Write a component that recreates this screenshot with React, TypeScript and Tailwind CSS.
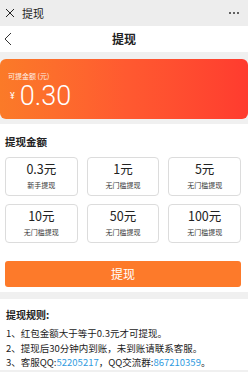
import React from "react";

const font = { fontFamily: '"Noto Sans CJK SC", "Noto Sans", sans-serif' };

const items = [
  { a: "0.3元", s: "新手提现" },
  { a: "1元", s: "无门槛提现" },
  { a: "5元", s: "无门槛提现" },
  { a: "10元", s: "无门槛提现" },
  { a: "50元", s: "无门槛提现" },
  { a: "100元", s: "无门槛提现" },
];

export default function App() {
  return (
    <div
      className="w-[248px] h-[372px] overflow-hidden bg-[#f0f0f0] text-[#222]"
      style={font}
    >
      {/* top bar */}
      <div className="h-[26px] bg-[#ededed] flex items-center justify-between pl-[5px] pr-[9px]">
        <div className="flex items-center gap-[7px]">
          <svg width="10" height="10" viewBox="0 0 10 10">
            <path d="M1 1 L9 9 M9 1 L1 9" stroke="#222" strokeWidth="1" />
          </svg>
          <span className="text-[11px] leading-none">提现</span>
        </div>
        <div className="flex gap-[2px]">
          <span className="w-[2px] h-[2px] rounded-full bg-[#333]" />
          <span className="w-[2px] h-[2px] rounded-full bg-[#333]" />
          <span className="w-[2px] h-[2px] rounded-full bg-[#333]" />
        </div>
      </div>
      {/* nav */}
      <div className="h-[26px] bg-white relative flex items-center justify-center">
        <svg
          className="absolute left-[4px] top-[6px]"
          width="8"
          height="14"
          viewBox="0 0 8 14"
        >
          <path d="M7 1 L1 7 L7 13" stroke="#333" strokeWidth="1" fill="none" />
        </svg>
        <span className="text-[12px] font-bold">提现</span>
      </div>
      {/* card */}
      <div className="pt-[7px] pb-[5px]">
        <div className="h-[60px] rounded-[6px] bg-gradient-to-r from-[#fb7a28] via-[#ff5a30] to-[#ff3b2f] text-white pl-[8px] pt-[14px]">
          <div className="text-[7px] leading-none opacity-90">可提金额 (元)</div>
          <div className="flex items-end mt-[3px]">
            <span
              className="text-[9px] leading-none mb-[9px] ml-[2px]"
              style={{ fontFamily: "Roboto, sans-serif" }}
            >
              ¥
            </span>
            <span
              className="text-[27px] leading-none font-light ml-[5px]"
              style={{ fontFamily: "Roboto, sans-serif" }}
            >
              0.30
            </span>
          </div>
        </div>
      </div>
      {/* amount section */}
      <div className="bg-white px-[5px] pt-[13px] pb-[5px]">
        <div className="text-[10.5px] font-bold leading-none">提现金额</div>
        <div className="grid grid-cols-3 gap-x-[9px] gap-y-[8px] mt-[9px] pr-[2px]">
          {items.map((it) => (
            <div
              key={it.a}
              className="h-[39px] rounded-[4px] border border-[#dcdcdc] flex flex-col items-center justify-center"
            >
              <div className="text-[12.5px] leading-none">{it.a}</div>
              <div className="text-[7px] leading-none mt-[6px] text-[#333]">
                {it.s}
              </div>
            </div>
          ))}
        </div>
        <button className="mt-[18px] w-[236px] h-[26px] rounded-[3px] bg-[#fd7a2a] text-white text-[12px] flex items-center justify-center">
          提现
        </button>
      </div>
      {/* rules */}
      <div className="bg-white mt-[7px] px-[6px] pt-[9px] text-[9.5px] leading-[14.5px]">
        <div className="font-bold text-[10px] mb-[4px]">提现规则:</div>
        <div>1、红包金额大于等于0.3元才可提现。</div>
        <div>2、提现后30分钟内到账，未到账请联系客服。</div>
        <div>
          3、客服QQ:<span className="text-[#2f9be0]">52205217</span>，QQ交流群:
          <span className="text-[#2f9be0]">867210359</span>。
        </div>
      </div>
    </div>
  );
}
